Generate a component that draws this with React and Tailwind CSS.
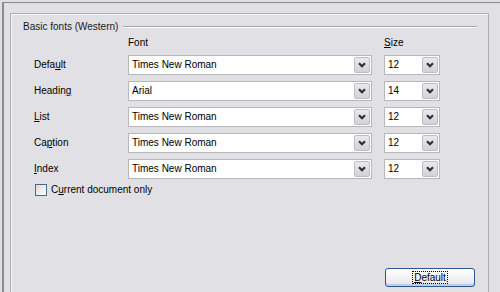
import { useState } from "react";

const rows = [
  { pre: "Defa", key: "u", post: "lt", font: "Times New Roman", size: "12" },
  { pre: "Headin", key: "g", post: "", font: "Arial", size: "14" },
  { pre: "", key: "L", post: "ist", font: "Times New Roman", size: "12" },
  { pre: "Ca", key: "p", post: "tion", font: "Times New Roman", size: "12" },
  { pre: "", key: "I", post: "ndex", font: "Times New Roman", size: "12" },
];

function Chevron() {
  return (
    <svg width="8" height="6" viewBox="0 0 8 6">
      <polyline points="1,1.2 4,4.3 7,1.2" fill="none" stroke="#2e2e2e" strokeWidth="2.1" />
    </svg>
  );
}

function Combo({ value }) {
  return (
    <div className="h-[20px] bg-white border border-[#b7b7bc] flex items-center pl-[3px] pr-[1px]">
      <span className="flex-1 truncate">{value}</span>
      <div className="w-[16px] h-[16px] rounded-[2px] border border-[#bdbdc4] bg-gradient-to-b from-[#e9e9ed] to-[#d2d2d8] flex items-center justify-center">
        <Chevron />
      </div>
    </div>
  );
}

export default function App() {
  const [current, setCurrent] = useState(false);

  return (
    <div className="w-[500px] h-[292px] bg-[#e1e0e4] overflow-hidden font-['Liberation_Sans',Arial,sans-serif] text-[10px] leading-[12px] text-black">
      <div className="mt-[2px] ml-[2px] h-[300px] border-t border-l-2 border-[#8c8b90] pl-[6px] pt-[10px]">
        {/* PANEL */}
        <div className="h-[300px] w-[479px] border border-[#aeadb2] shadow-[inset_1px_1px_0_#f7f7f9] pl-[12px] pt-[7px] flex flex-col">
          {/* FIELDSET HEADER */}
          <div className="flex items-center h-[12px]">
            <span className="text-[#1a1a1a]">Basic fonts (Western)</span>
            <div className="flex-1 ml-[5px] mr-[11px] h-[2px] border-t border-[#a6a5aa] border-b border-b-white" />
          </div>

          {/* GRID */}
          <div className="grid grid-cols-[94px_244px_12px_56px] gap-y-[6px] pl-[11px] mt-[4px] items-center">
            <div />
            <div>Font</div>
            <div />
            <div><u className="underline-offset-1">S</u>ize</div>
            {rows.map((r, i) => (
              <div key={i} className="contents">
                <div>
                  {r.pre}
                  <u className="underline-offset-1">{r.key}</u>
                  {r.post}
                </div>
                <Combo value={r.font} />
                <div />
                <Combo value={r.size} />
              </div>
            ))}
          </div>

          {/* CHECKBOX */}
          <label className="flex items-center gap-[4px] ml-[12px] mt-[5px] h-[12px] cursor-pointer">
            <span
              onClick={() => setCurrent((c) => !c)}
              className="w-[12px] h-[12px] border border-[#4a6a8d] bg-gradient-to-br from-[#dcdcd6] to-white flex items-center justify-center"
            >
              {current && <span className="text-[9px] leading-none">✓</span>}
            </span>
            <span>C<u className="underline-offset-1">u</u>rrent document only</span>
          </label>

          {/* DEFAULT BUTTON */}
          <div className="flex justify-end pr-[13px] mt-[72px]">
            <button className="w-[90px] h-[19px] rounded-[3px] border border-[#2a5894] shadow-[inset_0_-2px_0_#c6cbe0] bg-gradient-to-b from-white via-[#f3f3f5] to-[#e2e2ea] flex items-center justify-center">
              <span className="border border-dotted border-black px-[1px] leading-[11px]">
                <u className="underline-offset-1">D</u>efault
              </span>
            </button>
          </div>
        </div>
      </div>
    </div>
  );
}
